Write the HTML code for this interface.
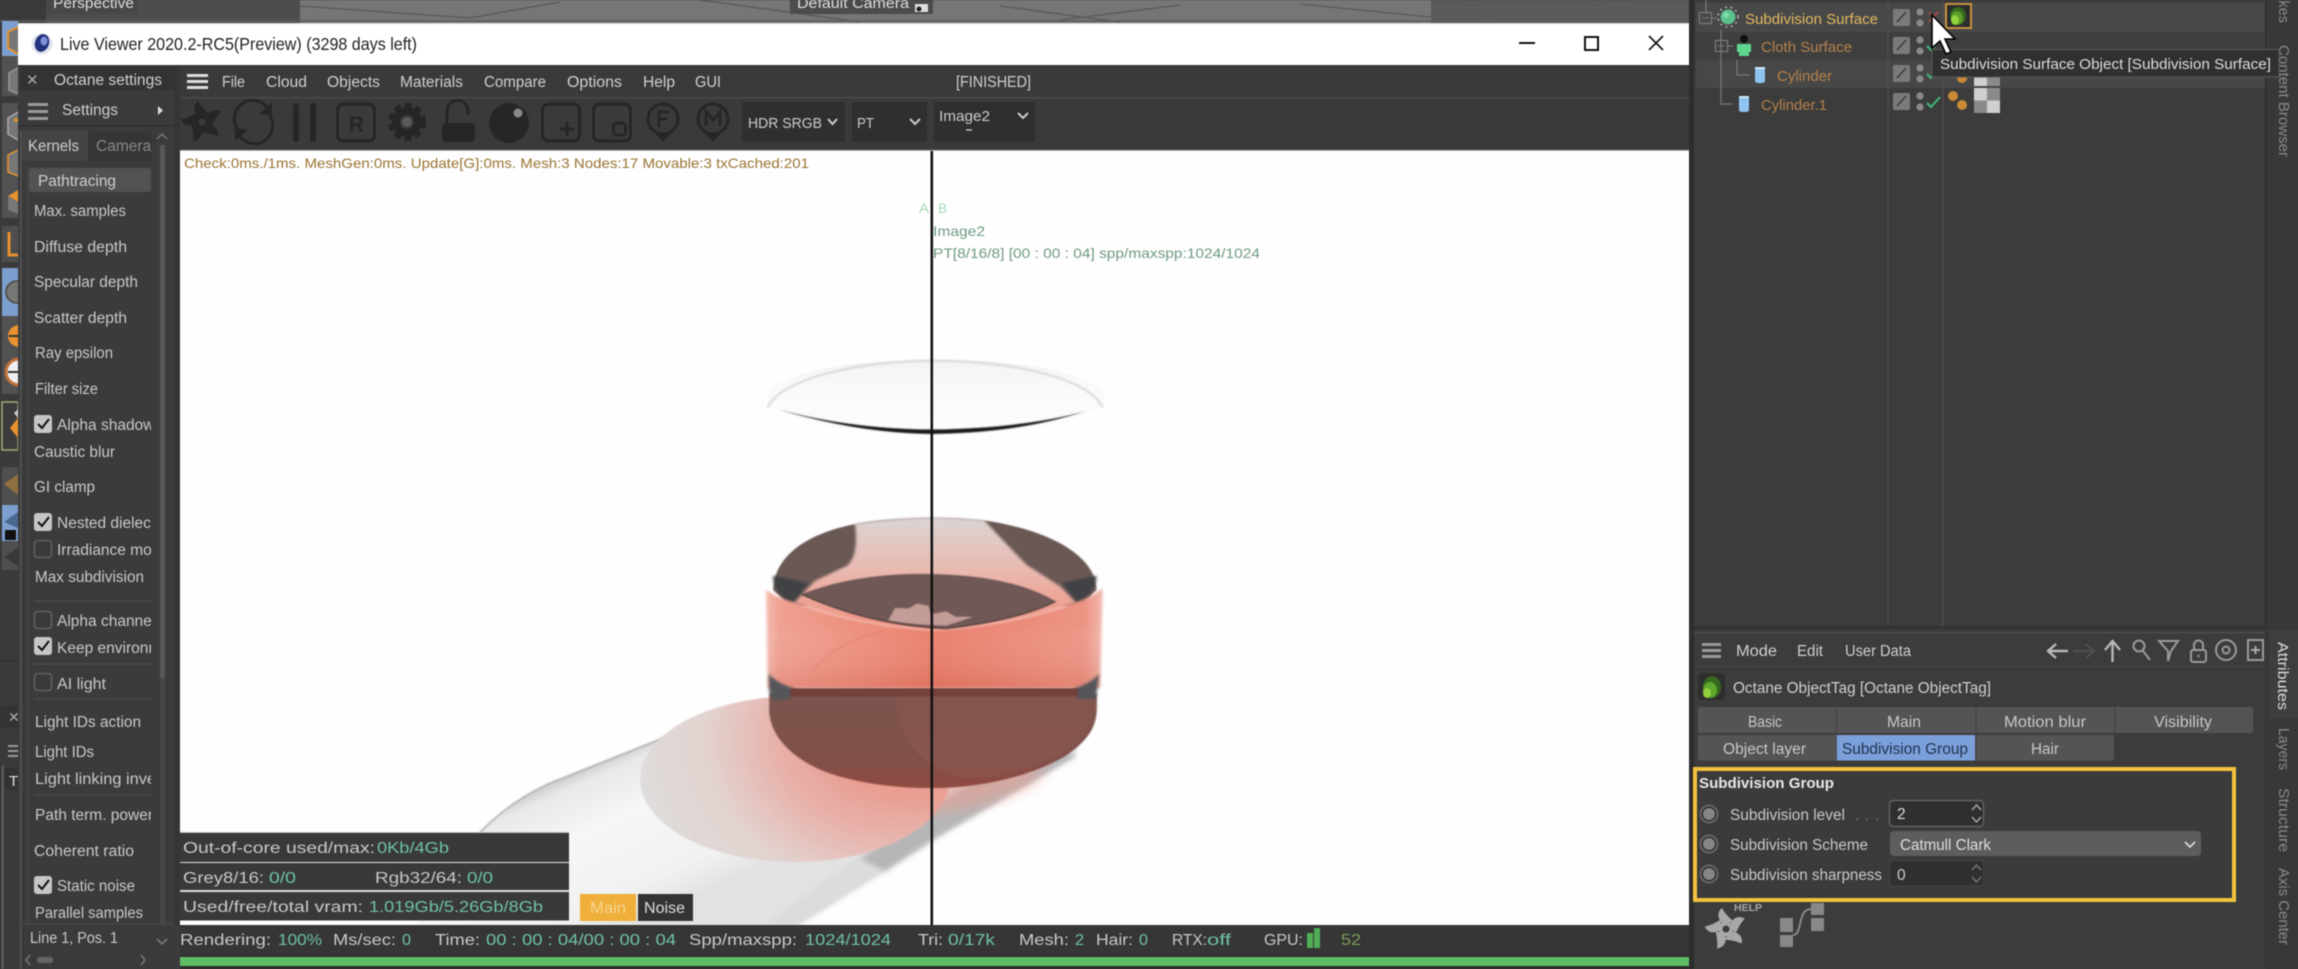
<!DOCTYPE html>
<html><head><meta charset="utf-8"><style>
html,body{margin:0;padding:0;background:#3c3c3c;width:2298px;height:969px;overflow:hidden}
svg{display:block;filter:blur(.45px)}
text{font-family:"Liberation Sans",sans-serif;font-size:15px;fill:#cbcbcb}
.m{font-size:15.5px;fill:#cfcfcf}
.t{fill:#6fc0a6}
.s{font-size:15.5px;fill:#c8c8c8}
.o{fill:#b5824a;font-size:15px}
.v{fill:#8a8a8a;font-size:15px}
.ic{fill:none;stroke:#262626;stroke-width:3}
.f{fill:#262626}
.a{fill:none;stroke:#999;stroke-width:2}
</style></head><body>
<svg width="2298" height="969" viewBox="0 0 2298 969" xmlns="http://www.w3.org/2000/svg">
<defs>
<clipPath id="lc"><rect x="20" y="160" width="131" height="765"/></clipPath>
<clipPath id="camc"><rect x="90" y="130" width="61" height="30"/></clipPath>
<clipPath id="rc"><rect x="180" y="151" width="1509" height="774"/></clipPath>
<g id="star"><path id="bl" d="M-3,-6 C-9,-10 -9,-17 -4,-21 C-1,-15 4,-11 8,-7 Z"/><use href="#bl" transform="rotate(72)"/><use href="#bl" transform="rotate(144)"/><use href="#bl" transform="rotate(216)"/><use href="#bl" transform="rotate(288)"/></g>
<linearGradient id="band" x1="0" x2="1" y1="0" y2="0"><stop offset="0" stop-color="#f4bcb1"/><stop offset=".04" stop-color="#f0a091"/><stop offset=".5" stop-color="#e97d6a"/><stop offset=".95" stop-color="#ec9585"/><stop offset="1" stop-color="#f2b9ae"/></linearGradient>
<linearGradient id="band2" x1="0" x2="0" y1="0" y2="1"><stop offset="0" stop-color="#fff" stop-opacity=".02"/><stop offset="1" stop-color="#b83e2e" stop-opacity=".2"/></linearGradient>
<linearGradient id="pale" x1="0" x2="0" y1="0" y2="1"><stop offset="0" stop-color="#dbd5d3"/><stop offset=".5" stop-color="#eab7ad"/><stop offset="1" stop-color="#ef8f7e"/></linearGradient>
<linearGradient id="low" x1="0" x2="0" y1="0" y2="1"><stop offset="0" stop-color="#7a534d"/><stop offset=".7" stop-color="#82504a"/><stop offset="1" stop-color="#8f4a40"/></linearGradient>
<radialGradient id="disc" gradientUnits="userSpaceOnUse" cx="880" cy="1120" r="580"><stop offset="0" stop-color="#e98c7e"/><stop offset=".42" stop-color="#e8aea6"/><stop offset=".72" stop-color="#e2d2cf"/><stop offset="1" stop-color="#dedcdb"/></radialGradient>
<linearGradient id="rim" x1="0" x2="0" y1="0" y2="1"><stop offset="0" stop-color="#f2f2f2"/><stop offset=".3" stop-color="#f9f9f9"/><stop offset="1" stop-color="#fdfdfd"/></linearGradient>
<linearGradient id="trk" gradientUnits="userSpaceOnUse" x1="300" y1="1140" x2="510" y2="1515"><stop offset="0" stop-color="#cfcfcf"/><stop offset=".07" stop-color="#e8e8e8"/><stop offset=".35" stop-color="#f6f6f6"/><stop offset=".8" stop-color="#f1f1f1"/><stop offset="1" stop-color="#e2e2e2"/></linearGradient>
<filter id="b1" x="-5%" y="-5%" width="110%" height="110%"><feGaussianBlur stdDeviation="1.6"/></filter>
<filter id="b2" x="-10%" y="-10%" width="120%" height="120%"><feGaussianBlur stdDeviation="3"/></filter>
<filter id="b4" x="-20%" y="-20%" width="140%" height="140%"><feGaussianBlur stdDeviation="8"/></filter>
<filter id="b8" x="-30%" y="-30%" width="160%" height="160%"><feGaussianBlur stdDeviation="18"/></filter>
</defs>

<!-- base -->
<rect width="2298" height="969" fill="#3c3c3c"/>

<!-- top viewport strip -->
<rect x="0" y="0" width="46" height="23" fill="#3a3a3a"/>
<rect x="46" y="0" width="254" height="23" fill="#4d4d4d"/>
<rect x="300" y="0" width="1131" height="23" fill="#767676"/>
<rect x="1431" y="0" width="258" height="23" fill="#5a5a5a"/>
<path d="M300,6 L470,18 M560,2 L470,18 M700,0 L860,22 M1000,6 L1120,22 M1180,5 L1060,20 M1300,4 L1440,18 M1480,20 L1630,4 M1450,6 L1600,18 M0,21 H1689" stroke="#5c5c5c" stroke-width="1.5" fill="none"/>
<rect x="46" y="0" width="92" height="14" fill="#484848"/>
<text x="53" y="8" textLength="81" lengthAdjust="spacingAndGlyphs" style="fill:#ddd">Perspective</text>
<rect x="790" y="0" width="143" height="14" fill="#4c4c4c"/>
<text x="797" y="8" textLength="112" lengthAdjust="spacingAndGlyphs" style="fill:#ddd">Default Camera</text>
<rect x="915" y="4" width="13" height="8" fill="#ddd"/><circle cx="919" cy="9" r="2.5" fill="#222"/>

<!-- far-left tool strip -->
<rect x="0" y="23" width="18" height="946" fill="#3a3a3a"/>
<rect x="2" y="21" width="16" height="35" fill="#7c9fd0"/>
<rect x="2" y="56" width="16" height="40" fill="#525252"/>
<rect x="2" y="103" width="16" height="115" fill="#525252"/>
<rect x="2" y="226" width="16" height="36" fill="#4e4e4e"/>
<rect x="2" y="268" width="16" height="48" fill="#7c9fd0"/>
<rect x="2" y="316" width="16" height="78" fill="#525252"/>
<rect x="2" y="402" width="16" height="48" fill="#3c3c3c" stroke="#a8a878" stroke-width="1.5"/>
<rect x="2" y="467" width="16" height="103" fill="#4f4f4f"/>
<rect x="2" y="505" width="16" height="36" fill="#7c9fd0"/>
<path d="M18,27 L8,32 L8,48 L18,54" fill="#777" stroke="#e8912e" stroke-width="2"/>
<path d="M18,68 L9,73 L9,90 L18,94" fill="#777" stroke="#999" stroke-width="1.5"/>
<path d="M18,112 L8,118 L8,134 L18,140" fill="#777" stroke="#aaa" stroke-width="1.5"/><circle cx="16" cy="120" r="2" fill="#e8912e"/>
<path d="M18,150 L8,155 L8,172 L18,176" fill="#777" stroke="#e8912e" stroke-width="1.5"/>
<path d="M18,190 L8,196 L18,202 Z" fill="#e8912e"/><path d="M18,202 L8,196 L8,210 L18,214 Z" fill="#777"/>
<path d="M9,232 V255 H18" fill="none" stroke="#e8912e" stroke-width="3"/>
<circle cx="17" cy="292" r="11" fill="#777" stroke="#555" stroke-width="2"/>
<circle cx="19" cy="336" r="11" fill="#e8912e"/><path d="M9,336 H18" stroke="#333" stroke-width="2"/>
<circle cx="19" cy="372" r="13" fill="#eee" stroke="#c2703a" stroke-width="3"/><path d="M8,372 H18" stroke="#333" stroke-width="2"/>
<path d="M10,428 L18,418 V438 Z" fill="#e8912e"/><path d="M14,413 L18,409 V418 Z" fill="#ccc"/>
<path d="M4,484 L18,474 V495 Z" fill="#8f6f3e"/>
<path d="M4,522 L18,512 V528 Z" fill="#4a6890"/><rect x="5" y="530" width="11" height="10" fill="#111"/>
<path d="M4,557 L18,548 V566 Z" fill="#383838"/>
<rect x="0" y="660" width="18" height="1" fill="#2a2a2a"/>
<rect x="2" y="765" width="1.5" height="204" fill="#666"/>
<rect x="0" y="706" width="18" height="22" fill="#333"/>
<text x="8" y="722" style="fill:#aaa;font-size:14px">✕</text>
<rect x="8" y="745" width="10" height="2" fill="#999"/><rect x="8" y="750" width="10" height="2" fill="#999"/><rect x="8" y="755" width="10" height="2" fill="#999"/>
<rect x="5" y="768" width="13" height="22" fill="#333"/>
<text x="9" y="786" style="fill:#ddd;font-size:15px">T</text>

<!-- Window title bar -->
<rect x="18" y="23" width="1671" height="42" fill="#fff"/>
<rect x="18" y="23" width="1671" height="1" fill="#d8d8d8"/>
<circle cx="42" cy="44" r="10.5" fill="#dfe3ee"/>
<ellipse cx="42" cy="43" rx="7" ry="9" fill="#23317e" transform="rotate(20 42 43)"/>
<ellipse cx="44" cy="41" rx="3.5" ry="4.5" fill="#7e93d8"/>
<text x="60" y="50" textLength="357" lengthAdjust="spacingAndGlyphs" style="fill:#222;font-size:17.5px">Live Viewer 2020.2-RC5(Preview) (3298 days left)</text>
<path d="M1519,43 H1535" stroke="#111" stroke-width="2"/>
<rect x="1585" y="37" width="13" height="13" fill="none" stroke="#111" stroke-width="2"/>
<path d="M1649,36 L1663,50 M1663,36 L1649,50" stroke="#111" stroke-width="1.6"/>

<!-- menu / toolbar -->
<rect x="18" y="65" width="1671" height="86" fill="#3a3a3a"/>
<rect x="180" y="97" width="1509" height="1.5" fill="#4a4a4a"/>
<rect x="180" y="150" width="1509" height="1.5" fill="#bbb"/>
<rect x="187" y="74" width="21" height="3" fill="#ddd"/><rect x="187" y="80" width="21" height="3" fill="#ddd"/><rect x="187" y="86" width="21" height="3" fill="#ddd"/>
<text class="m" x="222" y="87" textLength="23" lengthAdjust="spacingAndGlyphs">File</text>
<text class="m" x="266" y="87" textLength="41" lengthAdjust="spacingAndGlyphs">Cloud</text>
<text class="m" x="327" y="87" textLength="53" lengthAdjust="spacingAndGlyphs">Objects</text>
<text class="m" x="400" y="87" textLength="63" lengthAdjust="spacingAndGlyphs">Materials</text>
<text class="m" x="484" y="87" textLength="62" lengthAdjust="spacingAndGlyphs">Compare</text>
<text class="m" x="567" y="87" textLength="55" lengthAdjust="spacingAndGlyphs">Options</text>
<text class="m" x="643" y="87" textLength="32" lengthAdjust="spacingAndGlyphs">Help</text>
<text class="m" x="695" y="87" textLength="26" lengthAdjust="spacingAndGlyphs">GUI</text>
<text class="m" x="956" y="87" textLength="75" lengthAdjust="spacingAndGlyphs">[FINISHED]</text>

<!-- toolbar icons -->
<use href="#star" transform="translate(202,122)" fill="#262626"/>
<circle cx="202" cy="122" r="7.5" fill="#262626"/><circle cx="202" cy="122" r="3.5" fill="#3a3a3a"/>
<path d="M237,128 A18,18 0 0 1 268,109" class="ic"/><path d="M270,116 A18,18 0 0 1 239,135" class="ic"/>
<path d="M272,103 L272,116 L259,114 Z" class="f"/><path d="M235,141 L235,128 L248,130 Z" class="f"/>
<rect x="293" y="103" width="6" height="39" rx="3" class="f"/><rect x="310" y="103" width="6" height="39" rx="3" class="f"/>
<rect x="337.5" y="104" width="37" height="37" rx="6" class="ic"/>
<text x="349" y="132" style="fill:#262626;font-size:22px;font-weight:bold" textLength="15" lengthAdjust="spacingAndGlyphs">R</text>
<circle cx="407" cy="122" r="15" fill="none" stroke="#262626" stroke-width="8" stroke-dasharray="6 3.8"/>
<circle cx="407" cy="122" r="11" fill="none" stroke="#262626" stroke-width="8"/>
<circle cx="407" cy="122" r="5" fill="#5a5a5a"/>
<rect x="442" y="123" width="33" height="19" rx="4" class="f"/>
<path d="M447,123 V111 A10.5,10.5 0 0 1 468,111 V115" class="ic" stroke-width="4"/>
<circle cx="509" cy="123" r="20" class="f"/><circle cx="518" cy="113" r="4.5" fill="#888"/>
<rect x="542.5" y="104" width="37" height="37" rx="6" class="ic"/>
<path d="M560,129 H574 M567,122 V136" class="ic"/>
<rect x="593.5" y="104" width="37" height="37" rx="6" class="ic"/>
<rect x="613.5" y="123" width="12" height="12" rx="3" class="ic"/>
<circle cx="663" cy="119" r="15" class="ic"/><path d="M655,133 L663,142 L671,133 Z" class="f"/>
<path d="M659,127 V112 H669 M659,119 H667" class="ic"/>
<circle cx="713" cy="119" r="15" class="ic"/><path d="M705,133 L713,142 L721,133 Z" class="f"/>
<path d="M706,126 V112 L713,120 L720,112 V126" class="ic"/>

<!-- dropdowns -->
<rect x="742" y="102" width="103" height="40" fill="#2f2f2f"/>
<text x="748" y="128" textLength="74" lengthAdjust="spacingAndGlyphs" style="font-size:15px">HDR SRGB</text>
<path d="M828,119 L832.5,124 L837,119" fill="none" stroke="#ccc" stroke-width="2"/>
<rect x="852" y="102" width="75" height="40" fill="#2f2f2f"/>
<text x="857" y="128" textLength="17" lengthAdjust="spacingAndGlyphs">PT</text>
<path d="M910,119 L915,124 L920,119" fill="none" stroke="#ccc" stroke-width="2"/>
<rect x="934" y="102" width="101" height="40" fill="#2f2f2f"/>
<text x="939" y="121" textLength="51" lengthAdjust="spacingAndGlyphs">Image2</text>
<path d="M1018,113 L1023,118 L1028,113" fill="none" stroke="#ccc" stroke-width="2"/>
<path d="M966,130 H972" stroke="#bbb" stroke-width="1.5"/>

<!-- render area -->
<rect x="180" y="151" width="1509" height="774" fill="#fefefe"/>
<g clip-path="url(#rc)">
 <g transform="translate(500,340) scale(.4464,.3571)">
  <!-- shadow track -->
  <path d="M610,1005 L380,1105 L110,1240 Q10,1300 -60,1400 L-200,1660 L640,1660 L980,1392 L1290,1165 L1300,1100 Z" fill="url(#trk)" filter="url(#b2)"/>
  <path d="M1290,1165 L980,1392 L860,1490 L800,1460 L930,1330 L1220,1130 Z" fill="#b6b6b6" filter="url(#b4)"/>
  <path d="M860,1490 L640,1660 L600,1630 L800,1450 Z" fill="#dcdcdc" filter="url(#b4)"/>
  <path d="M610,1008 L380,1108 L110,1243 Q10,1300 -60,1400 L-120,1510" fill="none" stroke="#b0b0b0" stroke-width="4" filter="url(#b1)"/>
  <!-- disc -->
  <ellipse cx="660" cy="1230" rx="346" ry="232" fill="url(#disc)" filter="url(#b1)"/>
  <path d="M780,1110 L1240,1100 L1200,1240 Q1080,1320 960,1320 Q860,1300 760,1220 Z" fill="#ea9c90" opacity=".55" filter="url(#b8)"/>
  <g filter="url(#b1)">
  <!-- rim -->
  <ellipse cx="975" cy="160" rx="378" ry="106" fill="url(#rim)"/>
  <path d="M600,190 C625,110 800,58 975,58 C1150,58 1325,110 1350,190" fill="none" stroke="#d4d4d4" stroke-width="5" filter="url(#b1)"/>
  <path d="M625,195 Q800,262 970,264 Q1170,260 1310,200 Q1170,246 970,250 Q790,249 625,195 Z" fill="#1c1c1c"/>
  <!-- lower body -->
  <path d="M603,990 L603,1040 C606,1100 640,1160 720,1205 C790,1240 880,1255 970,1255 C1070,1255 1180,1225 1260,1170 C1310,1130 1337,1090 1337,1030 L1337,990 Z" fill="url(#low)"/>
  <path d="M885,990 C890,1100 930,1200 1040,1228 C1130,1225 1240,1190 1300,1120 L1337,1030 L1337,990 Z" fill="#8c5850" opacity=".5"/>
  <!-- dome -->
  <path d="M612,700 C614,610 680,535 830,508 Q970,488 1090,506 C1240,535 1336,610 1336,700 L1300,745 L650,745 Z" fill="#6a5855"/>
  <path d="M612,660 C612,700 635,730 660,735 L690,680 Z M1336,660 C1336,700 1310,730 1290,735 L1260,680 Z" fill="#3f4345" filter="url(#b2)"/>
  <!-- band -->
  <g filter="url(#b2)">
  <path d="M596,700 Q630,728 660,735 Q800,800 970,812 Q1150,800 1290,735 Q1320,725 1350,695 L1344,975 L600,975 Z" fill="url(#band)"/>
  <path d="M596,800 L1350,800 L1344,975 L600,975 Z" fill="url(#band2)"/>
  </g>
  <!-- pale center -->
  <path d="M795,515 Q805,600 778,632 L705,675 L660,735 Q800,800 970,812 Q1150,800 1290,735 L1255,690 L1180,630 Q1125,560 1085,505 Q970,488 830,508 Z" fill="url(#pale)" filter="url(#b2)"/>
  <!-- inner ellipse -->
  <path d="M675,712 Q800,650 970,655 Q1150,660 1245,732 Q1180,780 1000,808 Q830,800 675,712 Z" fill="#6f5956"/>
  <path d="M870,785 L885,750 L915,752 L935,738 L960,745 L965,768 L1000,760 L1020,775 L1060,775 L1000,800 Q930,798 870,785 Z" fill="#c39b97"/>
  <path d="M675,712 Q830,800 1000,808 Q1160,785 1245,732" fill="none" stroke="#4c3c3a" stroke-width="4"/>
  <!-- dark waterline -->
  <path d="M602,935 Q625,965 660,975 L650,1005 L612,1010 L603,985 Z M1342,935 Q1320,965 1285,975 L1295,1005 L1335,1005 Z" fill="#55575a" filter="url(#b2)"/>
  <path d="M650,975 H1295 V998 H650 Z" fill="#73403a"/>
  <!-- faint overlap -->
  <path d="M700,930 Q750,845 860,815" fill="none" stroke="#cf5f4d" stroke-width="3" opacity=".3"/>
  </g>
 </g>
</g>
<rect x="930.5" y="151" width="2.6" height="774" fill="#141414"/>
<text x="184" y="168" textLength="625" lengthAdjust="spacingAndGlyphs" style="fill:#9a7433;font-size:14px">Check:0ms./1ms. MeshGen:0ms. Update[G]:0ms. Mesh:3 Nodes:17 Movable:3 txCached:201</text>
<text x="919" y="213" textLength="10" lengthAdjust="spacingAndGlyphs" style="fill:#a9d8b8;font-size:14px">A</text>
<text x="938" y="213" textLength="9" lengthAdjust="spacingAndGlyphs" style="fill:#a9d8b8;font-size:14px">B</text>
<text x="933" y="236" textLength="52" lengthAdjust="spacingAndGlyphs" style="fill:#6f9a80;font-size:14px">Image2</text>
<text x="933" y="258" textLength="327" lengthAdjust="spacingAndGlyphs" style="fill:#6f9a80;font-size:14px">PT[8/16/8] [00 : 00 : 04] spp/maxspp:1024/1024</text>

<!-- info panels -->
<rect x="180" y="832" width="389" height="1.5" fill="#bbb"/>
<rect x="180" y="833" width="389" height="29" fill="#393939"/>
<rect x="180" y="862" width="389" height="1.5" fill="#ddd"/>
<rect x="180" y="863" width="389" height="27" fill="#393939"/>
<rect x="180" y="890" width="389" height="2" fill="#ddd"/>
<rect x="180" y="892" width="389" height="28.5" fill="#393939"/>
<text class="s" x="183" y="853" textLength="192" lengthAdjust="spacingAndGlyphs">Out-of-core used/max:</text>
<text class="s t" x="377" y="853" textLength="72" lengthAdjust="spacingAndGlyphs" style="fill:#6fc0a6">0Kb/4Gb</text>
<text class="s" x="183" y="883" textLength="81" lengthAdjust="spacingAndGlyphs">Grey8/16:</text>
<text class="s" x="269" y="883" textLength="27" lengthAdjust="spacingAndGlyphs" style="fill:#6fc0a6">0/0</text>
<text class="s" x="375" y="883" textLength="87" lengthAdjust="spacingAndGlyphs">Rgb32/64:</text>
<text class="s" x="467" y="883" textLength="26" lengthAdjust="spacingAndGlyphs" style="fill:#6fc0a6">0/0</text>
<text class="s" x="183" y="912" textLength="180" lengthAdjust="spacingAndGlyphs">Used/free/total vram:</text>
<text class="s" x="369" y="912" textLength="174" lengthAdjust="spacingAndGlyphs" style="fill:#6fc0a6">1.019Gb/5.26Gb/8Gb</text>
<rect x="580" y="894" width="56" height="27" fill="#f0ae3a"/>
<text class="s" x="590" y="913" textLength="36" lengthAdjust="spacingAndGlyphs" style="fill:#f6d690">Main</text>
<rect x="638" y="894" width="55" height="27" fill="#333"/>
<text class="s" x="644" y="913" textLength="41" lengthAdjust="spacingAndGlyphs" style="fill:#ddd">Noise</text>

<!-- status bar -->
<rect x="174" y="925" width="1515" height="30" fill="#363636"/>
<rect x="174" y="955" width="1515" height="14" fill="#2d2d2d"/>
<rect x="180" y="957" width="1509" height="9" fill="#5fbd65"/>
<g style="font-size:15.5px">
<text class="s" x="180" y="945" textLength="91" lengthAdjust="spacingAndGlyphs">Rendering:</text>
<text class="s" x="278" y="945" textLength="44" lengthAdjust="spacingAndGlyphs" style="fill:#6fc0a6">100%</text>
<text class="s" x="333" y="945" textLength="63" lengthAdjust="spacingAndGlyphs">Ms/sec:</text>
<text class="s" x="402" y="945" textLength="9" lengthAdjust="spacingAndGlyphs" style="fill:#6fc0a6">0</text>
<text class="s" x="435" y="945" textLength="45" lengthAdjust="spacingAndGlyphs">Time:</text>
<text class="s" x="486" y="945" textLength="190" lengthAdjust="spacingAndGlyphs" style="fill:#6fc0a6">00 : 00 : 04/00 : 00 : 04</text>
<text class="s" x="689" y="945" textLength="108" lengthAdjust="spacingAndGlyphs">Spp/maxspp:</text>
<text class="s" x="805" y="945" textLength="86" lengthAdjust="spacingAndGlyphs" style="fill:#6fc0a6">1024/1024</text>
<text class="s" x="918" y="945" textLength="25" lengthAdjust="spacingAndGlyphs">Tri:</text>
<text class="s" x="948" y="945" textLength="47" lengthAdjust="spacingAndGlyphs" style="fill:#6fc0a6">0/17k</text>
<text class="s" x="1019" y="945" textLength="50" lengthAdjust="spacingAndGlyphs">Mesh:</text>
<text class="s" x="1075" y="945" textLength="9" lengthAdjust="spacingAndGlyphs" style="fill:#6fc0a6">2</text>
<text class="s" x="1096" y="945" textLength="37" lengthAdjust="spacingAndGlyphs">Hair:</text>
<text class="s" x="1139" y="945" textLength="9" lengthAdjust="spacingAndGlyphs" style="fill:#6fc0a6">0</text>
<text class="s" x="1172" y="945" textLength="35" lengthAdjust="spacingAndGlyphs">RTX:</text>
<text class="s" x="1207" y="945" textLength="24" lengthAdjust="spacingAndGlyphs" style="fill:#6fc0a6">off</text>
<text class="s" x="1264" y="945" textLength="39" lengthAdjust="spacingAndGlyphs">GPU:</text>
<rect x="1307" y="933" width="6" height="15" fill="#4fae55"/><rect x="1314" y="928" width="6" height="20" fill="#4fae55"/>
<text class="s" x="1341" y="945" textLength="20" lengthAdjust="spacingAndGlyphs" style="fill:#7aa05a">52</text>
</g>

<!-- left settings panel -->
<rect x="18" y="65" width="162" height="904" fill="#3b3b3b"/>
<rect x="20" y="66" width="154" height="24" fill="#333"/>
<text x="26" y="85" style="fill:#aaa;font-size:15px">✕</text>
<text class="m" x="54" y="85" textLength="108" lengthAdjust="spacingAndGlyphs">Octane settings</text>
<rect x="28" y="103" width="20" height="3" fill="#999"/><rect x="28" y="110" width="20" height="3" fill="#999"/><rect x="28" y="117" width="20" height="3" fill="#999"/>
<text class="m" x="62" y="115" textLength="56" lengthAdjust="spacingAndGlyphs">Settings</text>
<path d="M158,106 L163,110.5 L158,115 Z" fill="#ddd"/>
<rect x="18" y="125" width="156" height="1.5" fill="#2f2f2f"/>
<rect x="20" y="131" width="68" height="30" fill="#444"/>
<rect x="88" y="131" width="64" height="30" fill="#353535"/>
<rect x="20" y="131" width="1.5" height="838" fill="#555"/>
<rect x="27" y="165" width="1.5" height="760" fill="#444"/>
<rect x="174" y="65" width="6" height="860" fill="#353535"/>
<text class="m" x="28" y="151" textLength="51" lengthAdjust="spacingAndGlyphs">Kernels</text>
<g clip-path="url(#camc)"><text class="m" x="96" y="151" style="fill:#888">Camera</text></g>
<path d="M157,139 L162,134 L167,139" fill="none" stroke="#777" stroke-width="1.5"/>
<rect x="160" y="145" width="5" height="780" fill="#474747"/>
<rect x="160" y="145" width="5" height="533" fill="#585858"/>
<rect x="29" y="168" width="122" height="24" rx="3" fill="#525252"/>
<text class="m" x="38" y="186" textLength="78" lengthAdjust="spacingAndGlyphs">Pathtracing</text>
<g clip-path="url(#lc)">
<text class="s" x="34" y="216" textLength="92" lengthAdjust="spacingAndGlyphs">Max. samples</text>
<text class="s" x="34" y="252" textLength="93" lengthAdjust="spacingAndGlyphs">Diffuse depth</text>
<text class="s" x="34" y="287" textLength="104" lengthAdjust="spacingAndGlyphs">Specular depth</text>
<text class="s" x="34" y="323" textLength="93" lengthAdjust="spacingAndGlyphs">Scatter depth</text>
<text class="s" x="35" y="358" textLength="78" lengthAdjust="spacingAndGlyphs">Ray epsilon</text>
<text class="s" x="35" y="394" textLength="63" lengthAdjust="spacingAndGlyphs">Filter size</text>
<text class="s" x="57" y="430">Alpha shadow</text>
<text class="s" x="34" y="457" textLength="81" lengthAdjust="spacingAndGlyphs">Caustic blur</text>
<text class="s" x="34" y="492" textLength="61" lengthAdjust="spacingAndGlyphs">GI clamp</text>
<text class="s" x="57" y="528">Nested dielectric</text>
<text class="s" x="57" y="555">Irradiance mode</text>
<text class="s" x="35" y="582" textLength="109" lengthAdjust="spacingAndGlyphs">Max subdivision</text>
<text class="s" x="57" y="626">Alpha channel</text>
<text class="s" x="57" y="653">Keep environment</text>
<text class="s" x="57" y="689" textLength="49" lengthAdjust="spacingAndGlyphs">AI light</text>
<text class="s" x="35" y="727" textLength="106" lengthAdjust="spacingAndGlyphs">Light IDs action</text>
<text class="s" x="35" y="757" textLength="59" lengthAdjust="spacingAndGlyphs">Light IDs</text>
<text class="s" x="35" y="784" textLength="131" lengthAdjust="spacingAndGlyphs">Light linking invert</text>
<text class="s" x="35" y="820">Path term. power</text>
<text class="s" x="34" y="856" textLength="100" lengthAdjust="spacingAndGlyphs">Coherent ratio</text>
<text class="s" x="57" y="891" textLength="78" lengthAdjust="spacingAndGlyphs">Static noise</text>
<text class="s" x="35" y="918" textLength="108" lengthAdjust="spacingAndGlyphs">Parallel samples</text>
</g>
<path d="M34,601 H151 M34,664 H151 M34,699 H151 M34,795 H151" stroke="#4e4e4e" stroke-width="1.2"/>
<!-- checkboxes -->
<g fill="#c6c6c6">
<rect x="34" y="415" width="18" height="18" rx="3"/><rect x="34" y="513" width="18" height="18" rx="3"/><rect x="34" y="637" width="18" height="18" rx="3"/><rect x="34" y="876" width="18" height="18" rx="3"/>
</g>
<path d="M38,424 L42,428 L49,419 M38,522 L42,526 L49,517 M38,646 L42,650 L49,641 M38,885 L42,889 L49,880" fill="none" stroke="#111" stroke-width="2"/>
<g fill="none" stroke="#666" stroke-width="1.3">
<rect x="34.5" y="540.5" width="17" height="17" rx="3"/><rect x="34.5" y="611.5" width="17" height="17" rx="3"/><rect x="34.5" y="673.5" width="17" height="17" rx="3"/>
</g>
<rect x="20" y="923" width="154" height="1.2" fill="#4a4a4a"/>
<text class="s" x="30" y="943" textLength="88" lengthAdjust="spacingAndGlyphs">Line 1, Pos. 1</text>
<path d="M157,939 L162,944 L167,939" fill="none" stroke="#888" stroke-width="1.3"/>
<path d="M30,955 L26,960 L30,965 M141,955 L145,960 L141,965" fill="none" stroke="#777" stroke-width="1.5"/>
<rect x="37" y="957" width="16" height="6" rx="3" fill="#666"/>

<rect x="1689" y="0" width="5" height="969" fill="#2d2d2d"/>

<!-- right vertical tabs -->
<rect x="2265" y="0" width="33" height="969" fill="#383838"/>
<rect x="2269" y="630" width="29" height="88" fill="#3e3e3e"/>
<rect x="2265" y="0" width="1.5" height="630" fill="#2e2e2e"/>
<text transform="translate(2279,-15) rotate(90)" class="v" textLength="38" lengthAdjust="spacingAndGlyphs">Takes</text>
<text transform="translate(2279,45) rotate(90)" class="v" textLength="112" lengthAdjust="spacingAndGlyphs">Content Browser</text>
<text transform="translate(2278,642) rotate(90)" class="v" textLength="68" lengthAdjust="spacingAndGlyphs" style="fill:#dcdcdc">Attributes</text>
<text transform="translate(2279,728) rotate(90)" class="v" textLength="42" lengthAdjust="spacingAndGlyphs">Layers</text>
<text transform="translate(2279,788) rotate(90)" class="v" textLength="64" lengthAdjust="spacingAndGlyphs">Structure</text>
<text transform="translate(2279,868) rotate(90)" class="v" textLength="77" lengthAdjust="spacingAndGlyphs">Axis Center</text>

<!-- object manager -->
<rect x="1694" y="0" width="571" height="632" fill="#3c3c3c"/>
<rect x="1696" y="3" width="569" height="29" fill="#484848"/>
<rect x="1696" y="32" width="569" height="28" fill="#3f3f3f"/>
<rect x="1696" y="60" width="569" height="28" fill="#474747"/>
<path d="M1888,0 V628 M1943,0 V628" stroke="#4f4f4f" stroke-width="1.2"/>
<rect x="1694" y="626" width="571" height="3" fill="#323232"/>
<path d="M1706,0 V13 M1721,30 V104 H1733 M1737,60 V75 H1750 M1727,46 H1733" stroke="#777" stroke-width="1.3" fill="none"/>
<rect x="1699.5" y="12.5" width="12" height="11" fill="none" stroke="#777" stroke-width="1.3"/><path d="M1702,18 H1709 M1712,18 H1718" stroke="#777"/>
<rect x="1715.5" y="40.5" width="12" height="11" fill="none" stroke="#777" stroke-width="1.3"/><path d="M1718,46 H1725" stroke="#777"/>
<!-- object icons -->
<circle cx="1728" cy="17" r="10" fill="none" stroke="#ccc" stroke-width="1.5" stroke-dasharray="1.5 4"/>
<circle cx="1728" cy="17" r="7.5" fill="#5cc08c"/><circle cx="1726" cy="15" r="3" fill="#7ddcb0"/>
<circle cx="1744" cy="39" r="4" fill="#111"/>
<path d="M1737,44 L1751,44 L1751,52 L1749,52 L1749,56 L1739,56 L1739,52 L1737,52 Z" fill="#5fd68f"/>
<rect x="1755" y="67" width="10" height="16" rx="2.5" fill="#8fc3f2"/><rect x="1755" y="67" width="10" height="2" fill="#cfe4f8"/>
<rect x="1739" y="96" width="10" height="16" rx="2.5" fill="#8fc3f2"/><rect x="1739" y="96" width="10" height="2" fill="#cfe4f8"/>
<text x="1745" y="24" textLength="133" lengthAdjust="spacingAndGlyphs" style="fill:#e2b85e;font-size:15px">Subdivision Surface</text>
<text class="o" x="1761" y="52" textLength="91" lengthAdjust="spacingAndGlyphs">Cloth Surface</text>
<text class="o" x="1777" y="81" textLength="55" lengthAdjust="spacingAndGlyphs">Cylinder</text>
<text class="o" x="1761" y="110" textLength="66" lengthAdjust="spacingAndGlyphs">Cylinder.1</text>
<!-- edit squares/dots/checks -->
<g id="ed">
<rect x="1893" y="9" width="17" height="17" rx="2" fill="#7a7a7a"/><path d="M1897,22 L1906,12" stroke="#3c3c3c" stroke-width="1.5"/>
<circle cx="1920" cy="12" r="3.6" fill="#8a8a8a"/><circle cx="1920" cy="23" r="3.6" fill="#8a8a8a"/>
</g>
<use href="#ed" y="28"/><use href="#ed" y="56"/><use href="#ed" y="84"/>
<path d="M1929,12 L1938,22 M1938,12 L1929,22" stroke="#b04a42" stroke-width="1.8"/>
<path d="M1927,46 L1931,50 L1940,40" fill="none" stroke="#3fb97a" stroke-width="2"/>
<path d="M1927,74 L1931,78 L1940,68" fill="none" stroke="#3fb97a" stroke-width="2"/>
<path d="M1927,103 L1931,107 L1940,97" fill="none" stroke="#3fb97a" stroke-width="2"/>
<!-- tags -->
<rect x="1946" y="4" width="25" height="24" fill="#2c2c2c" stroke="#c89040" stroke-width="2"/>
<ellipse cx="1958" cy="16" rx="8" ry="9" fill="#35691f"/><ellipse cx="1957" cy="18" rx="6" ry="7" fill="#5b9c2a"/><ellipse cx="1955" cy="20" rx="4" ry="5" fill="#8fd13e"/>
<circle cx="1953" cy="96" r="5" fill="#c98a35"/><circle cx="1962" cy="105" r="5" fill="#c98a35"/>
<circle cx="1962" cy="78" r="5" fill="#c98a35"/>
<rect x="1974" y="88" width="26" height="25" fill="#8a8a8a"/>
<path d="M1974,88 h13 v12.5 h-13 Z M1987,100.5 h13 v12.5 h-13 Z" fill="#cfcfcf"/>
<rect x="1974" y="76" width="26" height="10" fill="#8a8a8a"/><path d="M1974,76 h13 v10 h-13 Z" fill="#cfcfcf"/>
<!-- tooltip -->
<rect x="1932" y="49.5" width="347" height="27.5" fill="#303030" stroke="#565656" stroke-width="1.2"/>
<text x="1940" y="69" textLength="331" lengthAdjust="spacingAndGlyphs" style="fill:#dcdcdc;font-size:15px">Subdivision Surface Object [Subdivision Surface]</text>
<!-- cursor -->
<path d="M1932,15 L1932,48 L1940,41 L1946,54 L1951,52 L1945,39 L1955,39 Z" fill="#fff" stroke="#000" stroke-width="1.6"/>

<!-- attributes -->
<rect x="1694" y="632" width="571" height="1.5" fill="#4c4c4c"/>
<rect x="1702" y="643" width="19" height="3" fill="#999"/><rect x="1702" y="649" width="19" height="3" fill="#999"/><rect x="1702" y="655" width="19" height="3" fill="#999"/>
<text class="m" x="1736" y="656" textLength="41" lengthAdjust="spacingAndGlyphs">Mode</text>
<text class="m" x="1797" y="656" textLength="26" lengthAdjust="spacingAndGlyphs">Edit</text>
<text class="m" x="1845" y="656" textLength="66" lengthAdjust="spacingAndGlyphs">User Data</text>
<rect x="1694" y="666" width="571" height="1" fill="#464646"/>
<path d="M2068,651 H2048 M2056,644 L2048,651 L2056,658" fill="none" stroke="#b8b8b8" stroke-width="2.4"/>
<path d="M2073,651 H2093 M2086,644 L2094,651 L2086,658" fill="none" stroke="#505050" stroke-width="2"/>
<path d="M2112.5,662 V642 M2105,650 L2112.5,641 L2120,650" fill="none" stroke="#b8b8b8" stroke-width="2.4"/>
<circle cx="2139" cy="646" r="5.5" class="a"/><path d="M2143,651 L2150,660" class="a" stroke-width="3"/>
<path d="M2159,641 H2178 L2171,651 L2168,661 V651 Z" class="a"/>
<rect x="2191" y="650" width="15" height="12" rx="2" class="a"/><path d="M2194,650 V645 A4.5,4.5 0 0 1 2203,645 V650" class="a"/><circle cx="2198.5" cy="656" r="1.2" fill="#999"/>
<circle cx="2226" cy="650" r="10" class="a"/><circle cx="2226" cy="650" r="3.5" class="a"/>
<rect x="2248" y="640" width="15" height="20" class="a"/><path d="M2251,650 H2260 M2255.5,646 V654" stroke="#aaa" stroke-width="2"/>
<rect x="1698" y="673" width="27" height="27" rx="4" fill="#2e2e2e"/>
<ellipse cx="1712" cy="687" rx="9" ry="11" fill="#35691f"/><ellipse cx="1710" cy="690" rx="7" ry="8" fill="#5fa82e"/><ellipse cx="1707" cy="693" rx="4" ry="5" fill="#8fd13e"/>
<text class="m" x="1733" y="693" textLength="258" lengthAdjust="spacingAndGlyphs">Octane ObjectTag [Octane ObjectTag]</text>
<!-- tabs -->
<rect x="1698" y="707" width="555" height="26" rx="2" fill="#545454"/>
<rect x="1698" y="735" width="416" height="25.5" rx="2" fill="#545454"/>
<path d="M1836.5,707 V733 M1976,707 V733 M2115,707 V733 M1976,735 V760" stroke="#444" stroke-width="1.2"/>
<rect x="1837" y="735" width="138" height="25.5" fill="#7b9fd9"/>
<text class="s" x="1748" y="727" textLength="34" lengthAdjust="spacingAndGlyphs">Basic</text>
<text class="s" x="1887" y="727" textLength="34" lengthAdjust="spacingAndGlyphs">Main</text>
<text class="s" x="2004" y="727" textLength="82" lengthAdjust="spacingAndGlyphs">Motion blur</text>
<text class="s" x="2154" y="727" textLength="58" lengthAdjust="spacingAndGlyphs">Visibility</text>
<text class="s" x="1723" y="754" textLength="83" lengthAdjust="spacingAndGlyphs">Object layer</text>
<text class="s" x="1842" y="754" textLength="126" lengthAdjust="spacingAndGlyphs" style="fill:#1f3350">Subdivision Group</text>
<text class="s" x="2031" y="754" textLength="28" lengthAdjust="spacingAndGlyphs">Hair</text>
<!-- subdivision group -->
<rect x="1695" y="769" width="539" height="131" fill="#3b3b3b" stroke="#f2c23c" stroke-width="4"/>
<text x="1699" y="788" textLength="135" lengthAdjust="spacingAndGlyphs" style="font-weight:bold;fill:#e8e8e8;font-size:15px">Subdivision Group</text>
<g fill="#2e2e2e" stroke="#666" stroke-width="2">
<circle cx="1709" cy="814" r="8.5"/><circle cx="1709" cy="844" r="8.5"/><circle cx="1709" cy="874" r="8.5"/>
</g>
<g fill="#858585">
<circle cx="1709" cy="814" r="6"/><circle cx="1709" cy="844" r="6"/><circle cx="1709" cy="874" r="6"/>
</g>
<text class="s" x="1730" y="820" textLength="115" lengthAdjust="spacingAndGlyphs">Subdivision level</text>
<text x="1855" y="820" textLength="24" style="fill:#888;font-size:14px">. . .</text>
<text class="s" x="1730" y="850" textLength="138" lengthAdjust="spacingAndGlyphs">Subdivision Scheme</text>
<text class="s" x="1730" y="880" textLength="152" lengthAdjust="spacingAndGlyphs">Subdivision sharpness</text>
<rect x="1889.5" y="800.5" width="94" height="26" rx="4" fill="#2f2f2f" stroke="#6a6a6a" stroke-width="1.2"/>
<text class="s" x="1897" y="819" style="fill:#ddd">2</text>
<path d="M1972,810 L1976.5,805 L1981,810 M1972,817 L1976.5,822 L1981,817" fill="none" stroke="#aaa" stroke-width="1.4"/>
<rect x="1890" y="831" width="311" height="25" rx="4" fill="#5d5d5d"/>
<text class="s" x="1900" y="850" textLength="91" lengthAdjust="spacingAndGlyphs" style="fill:#ddd">Catmull Clark</text>
<path d="M2185,842 L2190,847 L2195,842" fill="none" stroke="#ddd" stroke-width="1.6"/>
<rect x="1889.5" y="860.5" width="94" height="25.5" rx="3" fill="#303030" stroke="#454545"/>
<text class="s" x="1897" y="880" style="fill:#ccc">0</text>
<path d="M1972,870 L1976.5,865 L1981,870 M1972,877 L1976.5,882 L1981,877" fill="none" stroke="#777" stroke-width="1.4"/>
<!-- help + nodes -->
<use href="#star" transform="translate(1726,929)" fill="#a8a8a8"/>
<circle cx="1726" cy="929" r="7.5" fill="#a8a8a8"/><circle cx="1726" cy="929" r="3.5" fill="#3c3c3c"/>
<text x="1734" y="911" textLength="28" lengthAdjust="spacingAndGlyphs" style="font-weight:bold;font-size:10.5px;fill:#a8a8a8">HELP</text>
<g fill="#888">
<rect x="1811" y="903" width="13" height="12"/><rect x="1811" y="918" width="13" height="13"/>
<rect x="1780" y="918" width="13" height="14"/><rect x="1780" y="935" width="13" height="12"/>
</g>
<path d="M1793,935 C1803,935 1797,909 1811,909" fill="none" stroke="#888" stroke-width="2"/>
</svg>
</body></html>
